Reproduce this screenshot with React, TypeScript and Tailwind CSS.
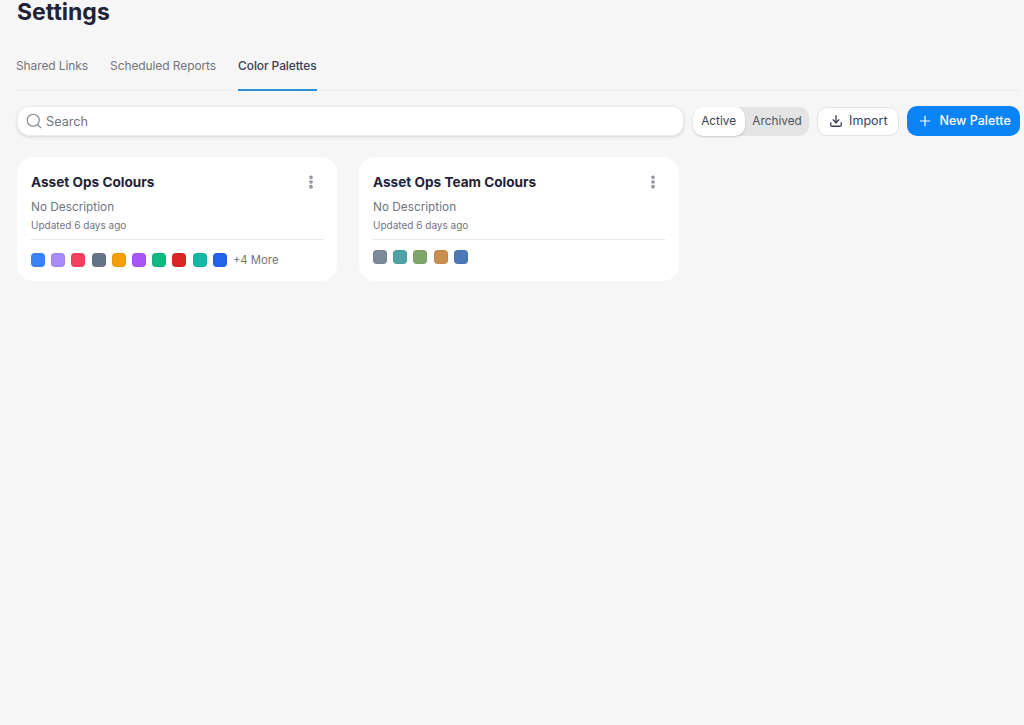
import { Download, MoreVertical, Plus, Search } from 'lucide-react'

interface Palette {
  name: string
  colors: string[]
  more?: number
  swatchRowClass: string
}

const palettes: Palette[] = [
  {
    name: 'Asset Ops Colours',
    colors: ['#3b82f6', '#a78bfa', '#f43f5e', '#64748b', '#f59e0b', '#a855f7', '#10b981', '#dc2626', '#14b8a6', '#2563eb'],
    more: 4,
    swatchRowClass: 'pt-[13px]',
  },
  {
    name: 'Asset Ops Team Colours',
    colors: ['#7d8a99', '#4fa3a5', '#7fa66a', '#c98f4e', '#4c78b5'],
    swatchRowClass: 'pt-[10px]',
  },
]

const tabs = ['Shared Links', 'Scheduled Reports', 'Color Palettes']

function PaletteCard({ palette }: { palette: Palette }) {
  return (
    <div className="w-[320px] h-[124px] rounded-2xl bg-white px-[14px] pt-[16px]">
      <div className="flex items-center justify-between h-[18px]">
        <h3 className="text-[13.6px] font-bold text-[#1e2338]">{palette.name}</h3>
        <MoreVertical className="w-4 h-4 mr-[4px] text-[#85888f]" strokeWidth={3.5} />
      </div>
      <p className="mt-[7px] text-[11.8px] leading-[18px] text-[#70757f]">No Description</p>
      <p className="mt-[1px] text-[10px] leading-[16px] text-[#70757f]">Updated 6 days ago</p>
      <div className={`mt-[6px] border-t border-[#e8e8ea] flex items-center gap-[6.2px] ${palette.swatchRowClass}`}>
        {palette.colors.map((color) => (
          <span
            key={color}
            className="w-[14px] h-[14px] rounded-[4px] border border-black/5"
            style={{ backgroundColor: color }}
          />
        ))}
        {palette.more && <span className="text-[11.3px] leading-[14px] text-[#70757f]">+{palette.more} More</span>}
      </div>
    </div>
  )
}

export default function App() {
  return (
    <div className="min-h-screen bg-[#f6f6f7] pl-[17px] pr-[4px] font-['Inter',_'Liberation_Sans',_sans-serif]">
      <h1 className="text-[23px] leading-[24px] font-bold text-[#1e2338]">Settings</h1>

      <div className="mt-[17px] flex gap-[22px] h-[50px] border-b border-[#ececee] -ml-[1px]">
        {tabs.map((tab) => {
          const active = tab === 'Color Palettes'
          return (
            <div
              key={tab}
              className={`h-[50px] pt-[16px] text-[12px] tracking-[-0.1px] leading-[18px] ${active ? 'border-b-2 border-[#2f8fd6] text-[#3b4152] font-medium' : 'text-[#70757f]'}`}
            >
              {tab}
            </div>
          )
        })}
      </div>

      <div className="mt-[15px] flex items-center h-[30px]">
        <div className="flex items-center gap-[3px] w-[668px] h-[30px] rounded-xl bg-white pl-[7px] border border-[#ececee] shadow-[0_1px_3px_rgba(0,0,0,0.14)]">
          <Search className="w-[18px] h-[18px] text-[#85888f]" strokeWidth={1.5} />
          <span className="mt-[1px] text-[12.7px] text-[#70757f]">Search</span>
        </div>

        <div className="ml-[9px] flex items-center w-[117px] h-[29px] rounded-[10px] bg-[#e4e4e4]">
          <div className="flex items-center justify-center w-[52px] h-[29px] pt-[1px] rounded-[10px] bg-white text-[11.8px] text-[#3b4152] shadow-[0_1px_2px_rgba(0,0,0,0.18)]">
            Active
          </div>
          <div className="flex-1 pt-[1px] text-center text-[11.8px] text-[#4d5260]">Archived</div>
        </div>

        <div className="ml-[8px] flex items-center justify-center gap-[6px] w-[82px] h-[29px] rounded-[10px] bg-white border border-[#e3e3e5] text-[12.5px] text-[#3b4152]">
          <Download className="w-[14px] h-[14px]" strokeWidth={2.25} />
          Import
        </div>

        <div className="ml-[8px] flex items-center justify-center gap-[7px] w-[113px] h-[30px] rounded-[10px] bg-[#0a84f5] text-[12.5px] font-medium text-white">
          <Plus className="w-4 h-4" strokeWidth={1.75} />
          New Palette
        </div>
      </div>

      <div className="mt-[21px] flex gap-[22px]">
        {palettes.map((palette) => (
          <PaletteCard key={palette.name} palette={palette} />
        ))}
      </div>
    </div>
  )
}
